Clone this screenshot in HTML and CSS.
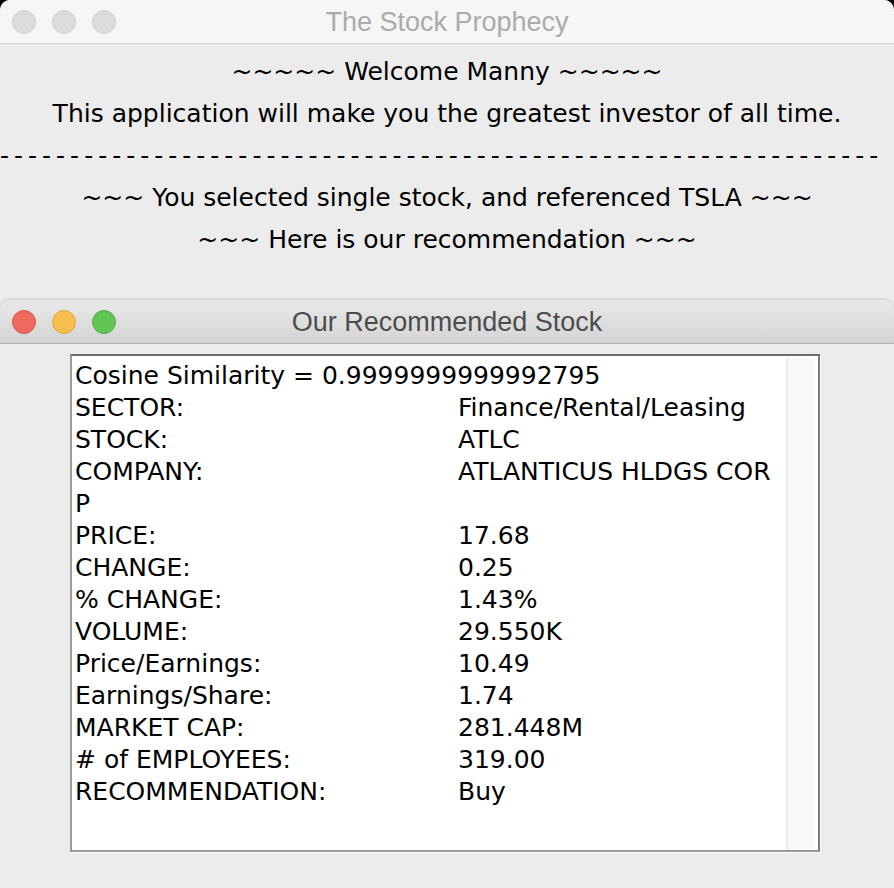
FILE: index.html
```html
<!DOCTYPE html>
<html>
<head>
<meta charset="utf-8">
<link rel="stylesheet" href="styles.css">
</head>
<body>
<div class="desk">
  <div class="win back">
    <div class="titlebar inactive">
      <div class="lights">
        <span class="light"></span><span class="light"></span><span class="light"></span>
      </div>
      <div class="title">The Stock Prophecy</div>
    </div>
    <div class="welcome">
      <div class="line">~~~~~ Welcome Manny ~~~~~</div>
      <div class="line">This application will make you the greatest investor of all time.</div>
      <div class="line dashes">---------------------------------------------------------------</div>
      <div class="line">~~~ You selected single stock, and referenced TSLA ~~~</div>
      <div class="line">~~~ Here is our recommendation ~~~</div>
    </div>
  </div>

  <div class="win front">
    <div class="titlebar active">
      <div class="lights">
        <span class="light red"></span><span class="light yellow"></span><span class="light green"></span>
      </div>
      <div class="title">Our Recommended Stock</div>
    </div>
    <div class="front-body">
      <div class="textarea">
        <div class="text">
          <div class="row full">Cosine Similarity = 0.9999999999992795</div>
          <div class="row"><span class="k">SECTOR:</span><span class="v">Finance/Rental/Leasing</span></div>
          <div class="row"><span class="k">STOCK:</span><span class="v">ATLC</span></div>
          <div class="row"><span class="k">COMPANY:</span><span class="v">ATLANTICUS HLDGS COR</span></div>
          <div class="row full">P</div>
          <div class="row"><span class="k">PRICE:</span><span class="v">17.68</span></div>
          <div class="row"><span class="k">CHANGE:</span><span class="v">0.25</span></div>
          <div class="row"><span class="k">% CHANGE:</span><span class="v">1.43%</span></div>
          <div class="row"><span class="k">VOLUME:</span><span class="v">29.550K</span></div>
          <div class="row"><span class="k">Price/Earnings:</span><span class="v">10.49</span></div>
          <div class="row"><span class="k">Earnings/Share:</span><span class="v">1.74</span></div>
          <div class="row"><span class="k">MARKET CAP:</span><span class="v">281.448M</span></div>
          <div class="row"><span class="k"># of EMPLOYEES:</span><span class="v">319.00</span></div>
          <div class="row"><span class="k">RECOMMENDATION:</span><span class="v">Buy</span></div>
        </div>
        <div class="scrollbar"></div>
      </div>
    </div>
  </div>
</div>
</body>
</html>
```
FILE: styles.css
```css
html, body {
  margin: 0;
  padding: 0;
  background: #000;
}
.desk {
  position: relative;
  width: 894px;
  height: 888px;
  overflow: hidden;
  background: #000;
}
.win {
  border-radius: 10px 10px 0 0;
  overflow: hidden;
  background: #ececec;
}
.back {
  width: 894px;
  height: 888px;
}
.titlebar {
  position: relative;
  height: 44px;
  display: flex;
  align-items: center;
  justify-content: center;
  box-sizing: border-box;
}
.titlebar.inactive {
  background: #f6f6f6;
  border-bottom: 1px solid #d2d2d2;
}
.titlebar.active {
  background: linear-gradient(#e9e9e9, #d4d4d4);
  border-bottom: 1px solid #b4b4b4;
}
.lights {
  position: absolute;
  left: 12px;
  top: 10px;
  display: flex;
  gap: 16px;
}
.light {
  width: 24px;
  height: 24px;
  border-radius: 50%;
  box-sizing: border-box;
  background: #dcdcdc;
  border: 1px solid #d0d0d0;
}
.light.red { background: #ee6a5e; border-color: #d9574d; }
.light.yellow { background: #f6be4f; border-color: #dea43b; }
.light.green { background: #62c655; border-color: #52ab45; }
.title {
  font-family: "Liberation Sans", Arial, sans-serif;
  font-size: 27px;
  padding-top: 1px;
}
.inactive .title { color: #ababab; }
.active .title { color: #4c4c4c; }

.welcome {
  padding-top: 7px;
  font-family: "DejaVu Sans", sans-serif;
  font-size: 25px;
  color: #000;
  text-align: center;
}
.line {
  height: 42px;
  line-height: 42px;
  white-space: nowrap;
}
.dashes {
  text-align: left;
  letter-spacing: 5px;
}

.front {
  position: absolute;
  left: 0;
  top: 300px;
  width: 894px;
  height: 588px;
  box-shadow: 0 -1px 3px rgba(0,0,0,0.15);
}
.front-body {
  padding: 10px 0 0 70px;
}
.textarea {
  width: 750px;
  height: 498px;
  box-sizing: border-box;
  background: #fff;
  border-top: 2px solid #6b6b6b;
  border-right: 2px solid #7a7a7a;
  border-bottom: 2px solid #9a9a9a;
  border-left: 2px solid #9a9a9a;
  box-shadow: 1px 1px 0 #fff;
  display: flex;
}
.text {
  flex: 1;
  padding: 4px 0 0 3px;
  font-family: "DejaVu Sans", sans-serif;
  font-size: 25px;
  color: #000;
}
.row {
  display: grid;
  grid-template-columns: 383px 1fr;
  height: 32px;
  line-height: 32px;
  white-space: nowrap;
}
.row.full { display: block; }
.scrollbar {
  width: 29px;
  margin: 2px 3px 0 0;
  background: #f8f8f8;
  border-left: 2px solid #ececec;
  box-sizing: border-box;
}
```
